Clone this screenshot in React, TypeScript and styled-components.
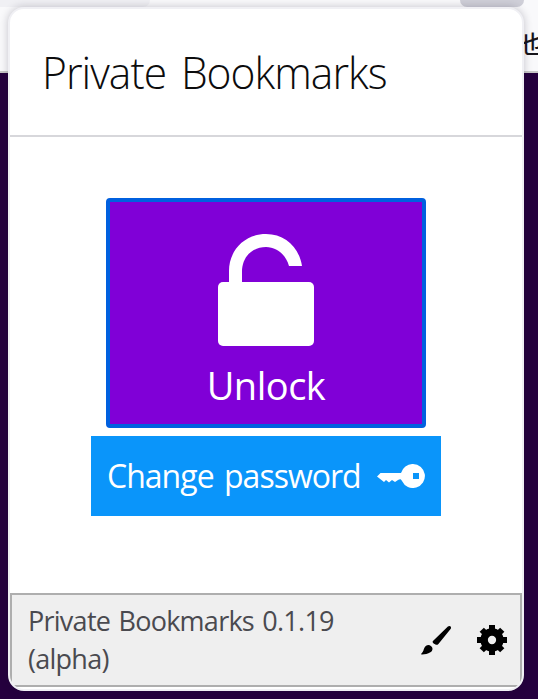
import React from "react";
import styled, { createGlobalStyle } from "styled-components";

const GlobalStyle = createGlobalStyle`
  * { box-sizing: border-box; }
  body { margin: 0; overflow: hidden; }
  button { font: inherit; padding: 0; cursor: pointer; }
`;

const Desktop = styled.div`
  position: relative;
  width: 538px;
  height: 699px;
  overflow: hidden;
  background: #25003e;
  font-family: "Open Sans", "Noto Sans", sans-serif;
`;

const TabStrip = styled.div`
  display: flex;
  justify-content: space-between;
  height: 7px;
  padding-right: 14px;
  background: #f9f9fb;
`;

const Tab = styled.div<{ $width: number; $tone: string }>`
  width: ${(p) => p.$width}px;
  height: 7px;
  background: ${(p) => p.$tone};
  border-bottom-right-radius: 7px;
  border-bottom-left-radius: ${(p) => (p.$width < 100 ? 7 : 0)}px;
`;

const BookmarkBar = styled.div`
  display: flex;
  justify-content: flex-end;
  height: 66px;
  padding-top: 19px;
  background: #f9f9fb;
  border-bottom: 2px solid #c8c8c8;
  color: #15141a;
  font: 500 24px/34px "Noto Sans CJK SC", sans-serif;
`;

const BarLabel = styled.span`
  width: 18px;
  white-space: nowrap;
`;

const Popup = styled.main`
  position: absolute;
  left: 8px;
  top: 7px;
  width: 516px;
  height: 684px;
  display: flex;
  flex-direction: column;
  overflow: hidden;
  background: #fff;
  border: 2px solid #f0f0f4;
  border-radius: 16px;
  box-shadow: 0 0 9px rgba(20, 18, 40, 0.23);
`;

const Header = styled.header`
  flex: none;
  height: 128px;
  padding: 31px 0 0 32px;
  border-bottom: 2px solid #d7d7db;
`;

const Title = styled.h1`
  margin: 0;
  color: #0c0c0d;
  font-size: 45px;
  font-weight: 300;
  line-height: 64px;
  letter-spacing: -1px;
  word-spacing: 5px;
  white-space: nowrap;
  transform: scaleX(0.945);
  transform-origin: 0 50%;
`;

const Actions = styled.section`
  flex: 1;
  display: flex;
  flex-direction: column;
  align-items: center;
  gap: 8px;
  padding-top: 61px;
`;

const UnlockButton = styled.button`
  display: flex;
  flex-direction: column;
  align-items: center;
  width: 320px;
  height: 230px;
  padding-top: 32px;
  background: #8000d7;
  border: 4px solid #0060df;
  border-radius: 4px;
  color: #fff;
`;

const UnlockLabel = styled.span`
  margin-top: 11px;
  font-size: 38px;
  line-height: 56px;
  letter-spacing: -0.5px;
`;

const PasswordButton = styled.button`
  display: flex;
  align-items: center;
  justify-content: space-between;
  width: 350px;
  height: 80px;
  padding: 0 16px;
  background: #0a95fa;
  border: 0;
  color: #fff;
`;

const PasswordLabel = styled.span`
  font-size: 32px;
  line-height: 44px;
  letter-spacing: -0.98px;
  word-spacing: 3px;
  white-space: nowrap;
`;

const Footer = styled.footer`
  flex: none;
  display: flex;
  align-items: center;
  height: 94px;
  margin-bottom: 2px;
  padding: 0 12px 0 16px;
  background: #efefef;
  border: 2px solid #aeaeae;
`;

const Version = styled.p`
  width: 350px;
  margin: 0;
  color: #4a4a4f;
  font-size: 27px;
  line-height: 38px;
  letter-spacing: -0.74px;
  word-spacing: 2px;
`;

const Tools = styled.div`
  display: flex;
  gap: 24px;
  margin-left: auto;
`;

const IconButton = styled.button`
  display: flex;
  width: 32px;
  height: 32px;
  background: none;
  border: 0;
  color: #000;
`;

const OpenLock = () => (
  <svg width="96" height="112" viewBox="0 0 96 112" fill="currentColor" aria-hidden="true">
    <path d="M11 49V37C11 16 27 0 48 0c19 0 33 13 36 32H71C68 21 59 13 48 13c-14 0-24 10-24 25v11z" />
    <rect y="48" width="96" height="64" rx="5" />
  </svg>
);

const Key = () => (
  <svg width="48" height="24" viewBox="0 0 48 24" fill="currentColor" aria-hidden="true">
    <path
      fillRule="evenodd"
      d="M36 0a12 12 0 1 1-11 17c-1-2-2-2-4-1l-3 2-3-2-3 2.5-3-2.5-2 2L0 12.5 3.5 9H24A12 12 0 0 1 36 0zm0 9v6h6V9z"
    />
  </svg>
);

const Brush = () => (
  <svg width="32" height="32" viewBox="0 0 32 32" fill="currentColor" aria-hidden="true">
    <path d="M12.7 17.2 27.9 2.6c1.8-1.5 3.9.1 2.9 2.2L18.4 19.9c-1 1.2-2.2 1.2-3.3.4-1.6-.9-2.8-1.8-2.4-3.1z" />
    <path d="M1.5 29.4c2-1.6 2-3.5 2.8-5.3 1.3-3.1 4.4-3.8 6.6-2.2 2.4 1.6 2 4.8-.5 6.3-2.5 1.7-5.6 2.2-8.2 2.2-1 0-1.5-.5-.7-1z" />
  </svg>
);

const gearTeeth = [0, 45, 90, 135, 180, 225, 270, 315];

const Gear = () => (
  <svg width="32" height="32" viewBox="0 0 32 32" aria-hidden="true">
    <circle cx="16" cy="16" r="7.9" fill="none" stroke="currentColor" strokeWidth="7.5" />
    {gearTeeth.map((angle) => (
      <rect
        key={angle}
        x="13"
        y={angle % 90 === 0 ? 1 : 1.5}
        width="6"
        height="6"
        fill="currentColor"
        transform={`rotate(${angle} 16 16)`}
      />
    ))}
  </svg>
);

export default function App() {
  return (
    <Desktop>
      <GlobalStyle />
      <TabStrip>
        <Tab $width={150} $tone="#f0f0f4" />
        <Tab $width={64} $tone="#cfcfd8" />
      </TabStrip>
      <BookmarkBar>
        <BarLabel>也</BarLabel>
      </BookmarkBar>
      <Popup>
        <Header>
          <Title>Private Bookmarks</Title>
        </Header>
        <Actions>
          <UnlockButton>
            <OpenLock />
            <UnlockLabel>Unlock</UnlockLabel>
          </UnlockButton>
          <PasswordButton>
            <PasswordLabel>Change password</PasswordLabel>
            <Key />
          </PasswordButton>
        </Actions>
        <Footer>
          <Version>
            Private Bookmarks 0.1.19
            <br />
            (alpha)
          </Version>
          <Tools>
            <IconButton aria-label="Theme">
              <Brush />
            </IconButton>
            <IconButton aria-label="Settings">
              <Gear />
            </IconButton>
          </Tools>
        </Footer>
      </Popup>
    </Desktop>
  );
}
